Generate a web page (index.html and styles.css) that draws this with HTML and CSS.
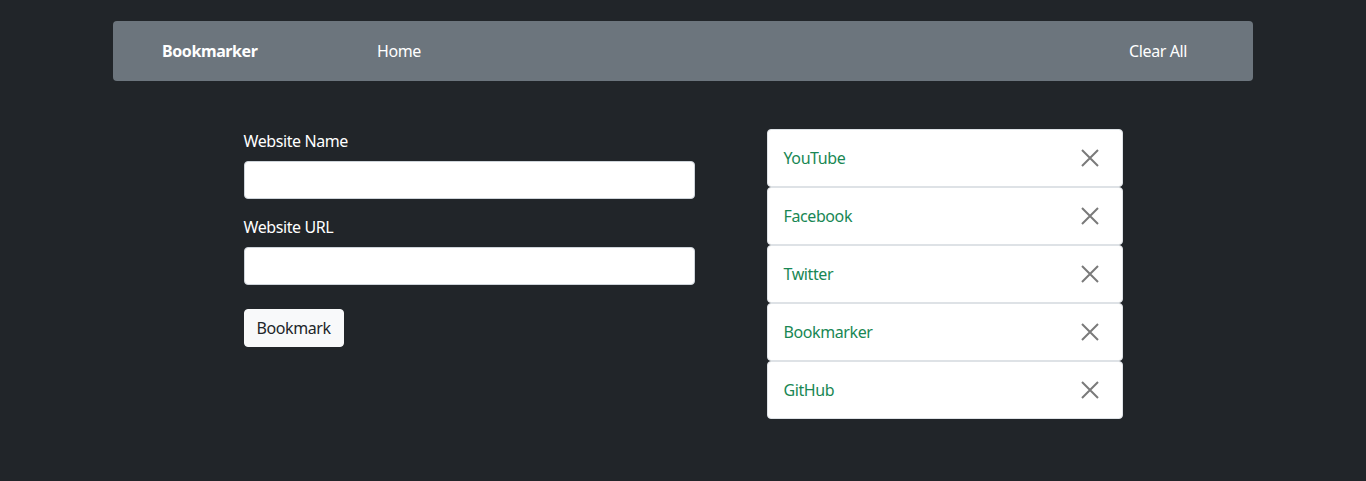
FILE: index.html
```html
<!DOCTYPE html>
<html lang="en">
<head>
<meta charset="utf-8">
<title>Bookmarker</title>
<link rel="stylesheet" href="styles.css">
</head>
<body>
<div class="container">
  <nav class="navbar">
    <a class="brand" href="#">Bookmarker</a>
    <a class="nav-link" href="#">Home</a>
    <a class="nav-link clear" href="#">Clear All</a>
  </nav>
  <main class="content">
    <form class="form">
      <label class="label" for="name">Website Name</label>
      <input class="input" id="name" type="text">
      <label class="label" for="url">Website URL</label>
      <input class="input" id="url" type="text">
      <button class="btn" type="button">Bookmark</button>
    </form>
    <ul class="list">
      <li class="item"><a class="site" href="#">YouTube</a><span class="close"><svg viewBox="0 0 18 18" width="18" height="18"><path d="M1 1L17 17M17 1L1 17"/></svg></span></li>
      <li class="item"><a class="site" href="#">Facebook</a><span class="close"><svg viewBox="0 0 18 18" width="18" height="18"><path d="M1 1L17 17M17 1L1 17"/></svg></span></li>
      <li class="item"><a class="site" href="#">Twitter</a><span class="close"><svg viewBox="0 0 18 18" width="18" height="18"><path d="M1 1L17 17M17 1L1 17"/></svg></span></li>
      <li class="item"><a class="site" href="#">Bookmarker</a><span class="close"><svg viewBox="0 0 18 18" width="18" height="18"><path d="M1 1L17 17M17 1L1 17"/></svg></span></li>
      <li class="item"><a class="site" href="#">GitHub</a><span class="close"><svg viewBox="0 0 18 18" width="18" height="18"><path d="M1 1L17 17M17 1L1 17"/></svg></span></li>
    </ul>
  </main>
</div>
</body>
</html>
```
FILE: styles.css
```css
* { box-sizing: border-box; }
html, body { margin: 0; padding: 0; }
body {
  background: #212529;
  color: #fff;
  font-family: "Noto Sans", "Open Sans", sans-serif;
  font-size: 16px;
  line-height: 24px;
  letter-spacing: -0.4px;
}
a { text-decoration: none; }
.container {
  width: 1140px;
  margin: 0 auto;
  padding-top: 21px;
}
.navbar {
  display: flex;
  align-items: center;
  height: 60px;
  background: #6c757d;
  border-radius: 4px;
  padding: 0 66px 0 49px;
}
.brand {
  width: 215px;
  color: #fff;
  font-weight: 700;
}
.nav-link { color: #fff; }
.clear { margin-left: auto; }
.content {
  display: flex;
  justify-content: center;
  gap: 72px;
  margin-top: 48px;
}
.form {
  width: 451px;
  display: flex;
  flex-direction: column;
  align-items: flex-start;
}
.label {
  display: block;
  margin-bottom: 8px;
}
.input {
  width: 100%;
  height: 38px;
  border: 1px solid #ced4da;
  border-radius: 4px;
  background: #fff;
  margin-bottom: 16px;
  font: inherit;
}
.input + .btn { margin-top: 8px; }
.btn {
  height: 38px;
  padding: 0 12px;
  background: #f8f9fa;
  color: #212529;
  border: 1px solid #f8f9fa;
  border-radius: 4px;
  font: inherit;
  letter-spacing: -0.4px;
}
.list {
  width: 356px;
  margin: 0;
  padding: 0;
  list-style: none;
}
.item {
  display: flex;
  align-items: center;
  justify-content: space-between;
  height: 58px;
  padding: 0 23px 0 16px;
  background: #fff;
  border: 1px solid #dee2e6;
  border-radius: 4px;
}
.site { color: #198754; }
.close { display: flex; }
.close svg {
  stroke: #7a7a7a;
  stroke-width: 2;
  fill: none;
}
```
